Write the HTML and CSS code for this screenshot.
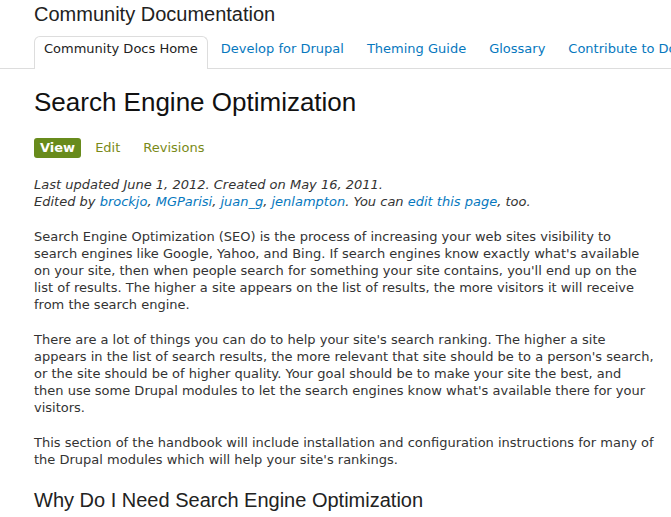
FILE: index.html
```html
<!DOCTYPE html>
<html lang="en">
<head>
    <meta charset="UTF-8">
    <title>Search Engine Optimization | Community Documentation</title>
    <link rel="stylesheet" href="styles.css">
</head>
<body>
    <div class="page">
        <div class="site-name">Community Documentation</div>
        <ul class="tabs">
            <li class="active"><a href="#">Community Docs Home</a></li>
            <li><a href="#">Develop for Drupal</a></li>
            <li><a href="#">Theming Guide</a></li>
            <li><a href="#">Glossary</a></li>
            <li><a href="#">Contribute to Docs</a></li>
        </ul>

        <h1 class="page-title">Search Engine Optimization</h1>

        <ul class="node-tabs">
            <li class="active"><a href="#">View</a></li>
            <li><a href="#">Edit</a></li>
            <li><a href="#">Revisions</a></li>
        </ul>

        <div class="meta">
            Last updated June 1, 2012. Created on May 16, 2011.<br>
            Edited by <a href="#">brockjo</a>, <a href="#">MGParisi</a>, <a href="#">juan_g</a>, <a href="#">jenlampton</a>. You can <a href="#">edit this page</a>, too.
        </div>

        <div class="content">
            <p>Search Engine Optimization (SEO) is the process of increasing your web sites visibility to search engines like Google, Yahoo, and Bing. If search engines know exactly what's available on your site, then when people search for something your site contains, you'll end up on the list of results. The higher a site appears on the list of results, the more visitors it will receive from the search engine.</p>
            <p>There are a lot of things you can do to help your site's search ranking. The higher a site appears in the list of search results, the more relevant that site should be to a person's search, or the site should be of higher quality. Your goal should be to make your site the best, and then use some Drupal modules to let the search engines know what's available there for your visitors.</p>
            <p>This section of the handbook will include installation and configuration instructions for many of the Drupal modules which will help your site's rankings.</p>
            <h2>Why Do I Need Search Engine Optimization</h2>
        </div>
    </div>
</body>
</html>
```

FILE: styles.css
```css
body {
    margin: 0;
    font-family: 'DejaVu Sans', Verdana, sans-serif;
    font-size: 13px;
    color: #333;
    background: #fff;
    overflow: hidden;
}
a {
    color: #0678be;
    text-decoration: none;
}
.page {
    padding-left: 34px;
}
.site-name {
    font-family: 'Liberation Sans', Arial, sans-serif;
    font-size: 20px;
    line-height: 24px;
    padding-top: 2px;
    color: #222;
}
.tabs {
    list-style: none;
    margin: 10px 0 0 -34px;
    padding: 0 0 0 34px;
    display: flex;
    border-bottom: 1px solid #ddd;
    white-space: nowrap;
}
.tabs li {
    margin-right: 3px;
}
.tabs a {
    display: block;
    padding: 4px 9px 11px;
    line-height: 16px;
    border: 1px solid transparent;
    border-bottom: 0;
    border-radius: 6px 6px 0 0;
    margin-bottom: -1px;
}
.tabs li.active a {
    color: #222;
    background: #fff;
    border-color: #ddd;
    padding-bottom: 12px;
}
.page-title {
    font-family: 'Liberation Sans', Arial, sans-serif;
    font-weight: normal;
    font-size: 26px;
    line-height: 32px;
    margin: 17px 0 0 0;
    color: #111;
}
.node-tabs {
    list-style: none;
    margin: 20px 0 0 0;
    padding: 0;
    display: flex;
}
.node-tabs li {
    margin-right: 5px;
}
.node-tabs a {
    display: block;
    padding: 2px 9px;
    line-height: 16px;
    color: #7a8a18;
    border-radius: 3px;
}
.node-tabs li.active a {
    background: #688b1c;
    color: #fff;
    font-weight: bold;
    padding: 2px 6px;
}
.meta {
    font-style: italic;
    line-height: 17px;
    margin-top: 18px;
    white-space: nowrap;
}
.content {
    width: 620.25px;
}
.content p {
    margin: 18px 0;
    line-height: 17px;
}
.content h2 {
    font-family: 'Liberation Sans', Arial, sans-serif;
    font-weight: normal;
    font-size: 20px;
    line-height: 24px;
    margin: 20px 0 0 0;
    color: #222;
}
```
